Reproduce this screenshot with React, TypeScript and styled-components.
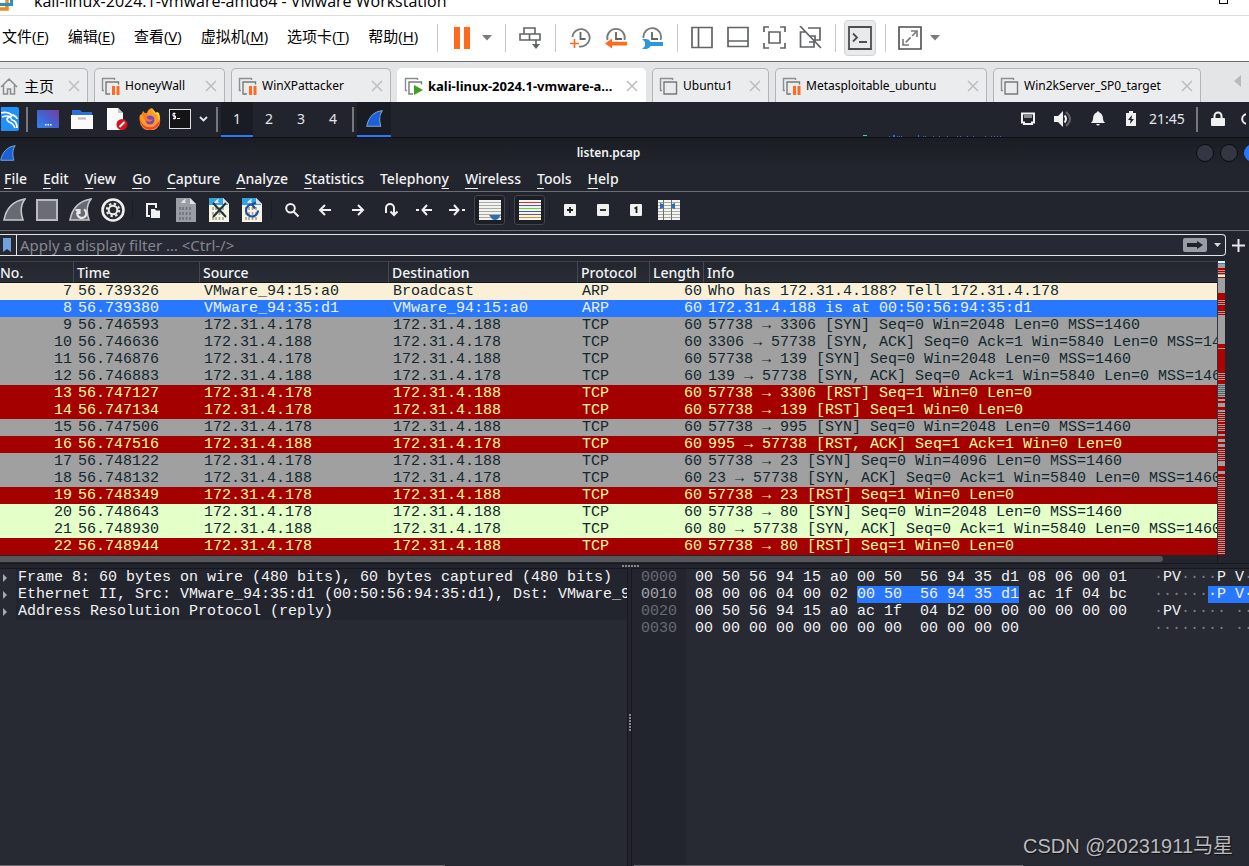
import React from "react";
import styled, { createGlobalStyle, css } from "styled-components";

const Global = createGlobalStyle`
  *, *::before, *::after { box-sizing: border-box; }
  html, body { margin: 0; padding: 0; background: #272933; }
  body { overflow: hidden; }
  button { font: inherit; color: inherit; background: none; border: 0; padding: 0; margin: 0; cursor: default; }
  svg { display: block; flex: none; }
`;

const winFont = `"Open Sans", "Noto Sans CJK SC", sans-serif`;
const kaliFont = `"Noto Sans", "Noto Sans CJK SC", sans-serif`;
const monoFont = `"Liberation Mono", monospace`;

const Page = styled.div`
  display: flex;
  flex-direction: column;
  height: 100vh;
  overflow: hidden;
  font-family: ${winFont};
  color: #000;
`;

/* ---------- host window ---------- */
const TitleBar = styled.header`
  display: flex;
  align-items: flex-end;
  flex: none;
  height: 16px;
  overflow: hidden;
  background: #fff;
  border-bottom: 1px solid #dcdcdc;
`;
const TitleText = styled.h1`
  flex: 1;
  margin: 0 0 4px 20px;
  font-size: 16px;
  line-height: 20px;
  font-weight: 400;
  white-space: nowrap;
`;
const MaxButton = styled.button`
  margin: 0 21px 11px 0;
`;

const MenuBar = styled.div`
  display: flex;
  align-items: center;
  flex: none;
  height: 46px;
  padding-bottom: 2px;
  background: #fff;
  border-bottom: 1px solid #6e6e6e;
`;
const HostMenus = styled.nav`
  display: flex;
  gap: 19px;
  padding-left: 2px;
  width: 430px;
  padding-bottom: 4px;
`;
const HostMenu = styled.button`
  font-size: 15px;
  line-height: 20px;
  white-space: nowrap;
  u { text-underline-offset: 2px; }
`;
const Divider = styled.span`
  flex: none;
  width: 1px;
  height: 28px;
  margin: 0 6px 0 7px;
  background: #c8c8c8;
`;
const HostTool = styled.button<{ $on?: boolean }>`
  display: flex;
  align-items: center;
  justify-content: center;
  width: 36px;
  height: 36px;
  ${(p) =>
    p.$on &&
    css`
      width: 32px;
      margin: 0 2px;
      background: #e9eaec;
      border: 1px solid #d2d3d5;
      border-radius: 4px;
    `}
`;
const HostDrop = styled.button`
  display: flex;
  justify-content: flex-start;
  width: 18px;
  padding-left: 2px;
`;

const TabStrip = styled.div`
  display: flex;
  align-items: flex-end;
  gap: 6px;
  flex: none;
  height: 40px;
  background: #e4e5e7;
`;
const Tab = styled.div<{ $w: number; $active?: boolean }>`
  display: flex;
  align-items: center;
  flex: 0 1 ${(p) => p.$w}px;
  min-width: 0;
  height: 34px;
  padding: 0 7px 0 6px;
  border: 1px solid ${(p) => (p.$active ? "#fff" : "#b4b5b8")};
  border-bottom: 0;
  border-radius: 5px 5px 0 0;
  background: ${(p) => (p.$active ? "#fff" : "#ebecee")};
  font-weight: ${(p) => (p.$active ? 700 : 400)};
`;
const TabLabel = styled.button<{ $cjk?: boolean; $big?: boolean }>`
  flex: 1;
  min-width: 0;
  margin-left: 5px;
  text-align: left;
  font-family: ${(p) => (p.$cjk ? winFont : kaliFont)};
  font-size: ${(p) => (p.$cjk ? 15 : p.$big ? 13 : 12)}px;
  line-height: 20px;
  white-space: nowrap;
  overflow: hidden;
`;
const HomeTab = styled(Tab)`
  padding-left: 0;
  border-left: 0;
  border-top-left-radius: 0;
`;
const TabScroll = styled.button`
  margin: 0 8px 15px auto;
`;

/* ---------- guest panel ---------- */
const Panel = styled.div`
  display: flex;
  align-items: stretch;
  flex: none;
  height: 36px;
  background: #22242d;
  border-bottom: 1px solid #0e0f13;
  color: #e4e6ea;
  font-family: ${kaliFont};
`;
const PanelItem = styled.button<{ $w: number; $active?: boolean }>`
  display: flex;
  align-items: center;
  justify-content: center;
  width: ${(p) => p.$w}px;
  font-size: 14px;
  border-bottom: 2px solid transparent;
  ${(p) =>
    p.$active &&
    css`
      background: #1a1c24;
      border-bottom-color: #2777ff;
    `}
`;
const PanelSep = styled.span<{ $m?: number }>`
  width: 2px;
  margin: 5px ${(p) => p.$m ?? 3}px;
  background: #77787d;
`;
const PanelFill = styled.div`
  flex: 1;
  display: flex;
  align-items: flex-end;
  justify-content: flex-end;
  padding-right: 7px;
`;
const Clock = styled.time`
  align-self: center;
  width: 36px;
  margin: 0 11px 2px 2px;
  font-size: 14px;
  line-height: 20px;
  display: flex;
  justify-content: center;
  white-space: nowrap;
`;

/* ---------- Wireshark ---------- */
const Shark = styled.main`
  display: flex;
  flex-direction: column;
  flex: 1;
  min-height: 0;
  background: #22252d;
  color: #f2f3f5;
  font-family: ${kaliFont};
`;
const SharkTitle = styled.div`
  display: grid;
  grid-template-columns: 1fr auto 1fr;
  align-items: center;
  flex: none;
  height: 30px;
  background: linear-gradient(#1b1d24, #22252d);
`;
const SharkName = styled.h2`
  margin: 0 0 0 -32px;
  font-size: 12px;
  line-height: 16px;
  font-weight: 600;
`;
const WindowButtons = styled.div`
  display: flex;
  gap: 6px;
  justify-content: flex-end;
  margin-right: -13px;
`;
const Dot = styled.button<{ $close?: boolean }>`
  width: 18px;
  height: 18px;
  border-radius: 50%;
  background: ${(p) => (p.$close ? "#2777ff" : "#333743")};
  border: 1px solid ${(p) => (p.$close ? "#2777ff" : "#0b0c10")};
`;
const SharkMenus = styled.nav`
  display: flex;
  gap: 16px;
  flex: none;
  height: 24px;
  padding-left: 4px;
  border-bottom: 1px solid #6c6d73;
`;
const SharkMenu = styled.button`
  font-size: 14px;
  font-weight: 500;
  line-height: 20px;
  height: 22px;
  white-space: nowrap;
  u { text-underline-offset: 4px; }
`;
const ToolBar = styled.div`
  display: flex;
  align-items: center;
  flex: none;
  height: 39px;
  margin-left: -3px;
  padding-bottom: 2px;
  border-bottom: 1px solid #6c6d73;
`;
const Tool = styled.button<{ $on?: boolean }>`
  display: flex;
  align-items: center;
  justify-content: center;
  width: 33px;
  height: 30px;
  ${(p) =>
    p.$on &&
    css`
      width: 31px;
      margin: 0 1px;
      border: 1px solid #41444d;
      border-radius: 3px;
      background: #1b1e25;
    `}
`;
const ToolSep = styled.span`
  width: 1px;
  height: 18px;
  margin: 0 3px;
  background: #1b1d24;
`;
const FilterRow = styled.div`
  display: flex;
  align-items: center;
  flex: none;
  height: 30px;
  padding: 2px 4px 4px 0;
`;
const FilterBox = styled.div`
  display: flex;
  align-items: center;
  flex: 1;
  height: 22px;
  background: #262833;
  border: 1px solid #e3e4e6;
  border-left: 0;
  border-radius: 0 4px 4px 0;
`;
const Bookmark = styled.button`
  display: flex;
  align-items: center;
  height: 20px;
  width: 17px;
  padding-left: 3px;
  border-right: 1px solid #e3e4e6;
`;
const FilterInput = styled.input`
  flex: 1;
  min-width: 0;
  height: 20px;
  padding: 0 3px;
  border: 0;
  outline: 0;
  background: transparent;
  color: #f2f3f5;
  font: 15px/20px ${kaliFont};
  &::placeholder { color: #85878e; opacity: 1; }
`;
const Apply = styled.button`
  display: flex;
  align-items: center;
  justify-content: center;
  width: 24px;
  height: 14px;
  margin-right: 7px;
  border-radius: 2px;
  background: #999ba7;
`;
const FilterDrop = styled.button`
  margin-right: 4px;
`;
const AddFilter = styled.button`
  margin: 0 0 0 6px;
`;

const ListArea = styled.section`
  display: flex;
  flex: none;
  padding-right: 24px;
`;
const ListWrap = styled.div`
  flex: 1;
  min-width: 0;
  overflow: hidden;
  border-right: 1px solid #33363f;
`;
const Table = styled.table`
  width: 100%;
  table-layout: fixed;
  border-collapse: separate;
  border-spacing: 0;
`;
const Th = styled.th<{ $w?: number; $first?: boolean }>`
  width: ${(p) => (p.$w ? p.$w + "px" : "auto")};
  height: 22px;
  padding: 2px 0 0 ${(p) => (p.$first ? 0 : 3)}px;
  text-align: left;
  font-weight: 500;
  font-size: 14px;
  line-height: 18px;
  border-top: 1px solid #3d4048;
  border-bottom: 1px solid #16181e;
  border-right: ${(p) => (p.$w ? "1px solid #454850" : "0")};
  background: linear-gradient(#23262e, #292d35);
`;
type Tone = "arp" | "sel" | "syn" | "rst" | "http";
const tones: Record<Tone, [string, string]> = {
  arp: ["#faf0d7", "#12272e"],
  sel: ["#2777ff", "#eaf2ff"],
  syn: ["#a0a0a0", "#12272e"],
  rst: ["#a40000", "#fffc9c"],
  http: ["#e4ffc7", "#12272e"],
};
const Row = styled.tr<{ $tone: Tone }>`
  background: ${(p) => tones[p.$tone][0]};
  color: ${(p) => tones[p.$tone][1]};
`;
const Td = styled.td<{ $right?: boolean }>`
  height: 17px;
  padding: 0 ${(p) => (p.$right ? 2 : 0)}px 0 ${(p) => (p.$right ? 0 : 4)}px;
  text-align: ${(p) => (p.$right ? "right" : "left")};
  font: 15px/17px ${monoFont};
  white-space: pre;
  overflow: hidden;
`;
const HScroll = styled.div`
  flex: none;
  height: 8px;
  margin-right: 31px;
  padding: 1px 0;
  border-right: 1px solid #16181e;
`;
const HThumb = styled.div`
  width: calc(100% - 54px);
  height: 6px;
  border-radius: 0 3px 3px 0;
  background: #55575b;
`;
const SplitH = styled.div`
  display: flex;
  align-items: center;
  justify-content: center;
  flex: none;
  height: 5px;
  padding-left: 12px;
  border-top: 1px solid #16181e;
`;
const Panes = styled.section`
  display: grid;
  grid-template-columns: minmax(0, 627fr) 5px minmax(0, 617fr);
  flex: 1;
  min-height: 0;
`;
const Pane = styled.div`
  display: flex;
  flex-direction: column;
  min-width: 0;
  overflow: hidden;
  background: #272933;
  border-top: 1px solid #16181e;
  font: 15px/17px ${monoFont};
`;
const SplitV = styled.div`
  display: flex;
  align-items: center;
  justify-content: center;
  padding-top: 10px;
  border-left: 1px solid #16181e;
  border-right: 1px solid #16181e;
`;
const TreeRow = styled.button`
  display: flex;
  align-items: center;
  flex: none;
  height: 17px;
  text-align: left;
  white-space: pre;
  span {
    flex: 1;
    min-width: 0;
    overflow: hidden;
    margin-left: 9px;
    padding-left: 2px;
    background: #23252e;
  }
  svg { margin-left: 3px; }
`;
const PaneFill = styled.div`
  flex: 1;
  display: flex;
`;
const PaneScroll = styled.div<{ $pct: number; $left?: number }>`
  flex: none;
  width: ${(p) => p.$pct}%;
  height: 1px;
  margin-left: ${(p) => p.$left ?? 0}px;
  background: #66686c;
`;
const HexRow = styled.div`
  display: flex;
  flex: none;
  height: 17px;
  white-space: pre;
`;
const Offset = styled.span<{ $hot?: boolean }>`
  flex: none;
  width: 54px;
  padding-left: 9px;
  background: #23252e;
  color: ${(p) => (p.$hot ? "#a3a5aa" : "#696b72")};
`;
const Bytes = styled.span`
  flex: none;
  width: 459px;
  padding-left: 9px;
  mark { color: inherit; background: #2777ff; }
`;
const Ascii = styled.span`
  padding-left: 9px;
  i { font-style: normal; color: #7d7f86; }
  mark { color: inherit; background: #2777ff; }
`;
const Gutter = styled.div`
  width: 54px;
  background: #23252e;
`;
const Watermark = styled.div`
  position: absolute;
  right: 16px;
  bottom: 8px;
  font: 20px/24px "Liberation Sans", "Noto Sans CJK SC", sans-serif;
  color: #b9babd;
  text-shadow: 1px 1px 1px #111;
`;

/* ---------- host icons ---------- */
const grey = "#616365";
const VmStack = ({ state }: { state: "off" | "paused" | "on" }) => (
  <svg width="19" height="18" viewBox="0 0 19 18" fill="none">
    <path d="M3 13.5H1.5V1.5H13.5V3" stroke="#8c8e90" strokeWidth="1.4" />
    <path
      d={state === "off" ? "M5 5H17.5V17H5Z" : "M9 17H5V5H17.5V7.5"}
      stroke="#77797b"
      strokeWidth="1.4"
    />
    {state === "paused" && <path d="M11 9h3v9h-3zM15.500 9h3v9h-3z" fill="#ff6a1f" />}
    {state === "on" && <path d="M10 8l9 5-9 5z" fill="#3fa01e" />}
  </svg>
);
const CloseX = ({ label }: { label: string }) => (
  <button aria-label={`Close ${label}`}>
    <svg width="12" height="12" viewBox="0 0 12 12">
      <path d="M1 1l10 10M11 1L1 11" stroke="#bdbec0" strokeWidth="1.5" />
    </svg>
  </button>
);
const Caret = () => (
  <svg width="10" height="6" viewBox="0 0 10 6">
    <path d="M0 0h10L5 5.500z" fill="#77797b" />
  </svg>
);
const ClockFace = ({ children }: { children: React.ReactNode }) => (
  <svg width="22" height="22" viewBox="0 0 22 22" fill="none">
    {children}
  </svg>
);

const hostTools = {
  pause: (
    <svg width="18" height="22" viewBox="0 0 18 22">
      <path d="M1 0h6v22H1zM11 0h6v22h-6z" fill="#ff6a1f" />
    </svg>
  ),
  cad: (
    <svg width="22" height="22" viewBox="0 0 22 22" fill="none" stroke={grey} strokeWidth="1.6">
      <path d="M5 1h11v6H5zM1 7h9.500v6H1zM10.500 7H21v6H10.500zM17 13v5" />
      <path d="M13 17h8l-4 5z" fill={grey} stroke="none" />
    </svg>
  ),
  snap: (
    <ClockFace>
      <path d="M3.300 10A8.700 8.700 0 1 1 10 19.300" stroke="#77797b" strokeWidth="1.8" />
      <path d="M11.500 5v7h5" stroke={grey} strokeWidth="1.800" />
      <path d="M5.500 12v9M1 16.500h9" stroke="#ff6a1f" strokeWidth="1.600" />
    </ClockFace>
  ),
  revert: (
    <ClockFace>
      <path d="M2.500 13A8.800 8.800 0 1 1 19.500 13" stroke="#77797b" strokeWidth="1.8" />
      <path d="M11 5v7h6" stroke={grey} strokeWidth="1.8" />
      <path d="M0 16.500l7-5v3.300h15v3.800H7v3z" fill="#ff6a1f" />
    </ClockFace>
  ),
  manage: (
    <ClockFace>
      <path d="M2.500 11A8.800 8.800 0 1 1 19.500 13" stroke="#77797b" strokeWidth="1.800" />
      <path d="M11 5v7h6" stroke={grey} strokeWidth="1.800" />
      <path d="M1 12h4.500a4.500 4.500 0 0 1 4 3H22v4H9.500a4.500 4.500 0 0 1-4 3H1l3-3v-4z" fill="#2b98dd" />
    </ClockFace>
  ),
};
const viewTools: [string, React.ReactNode][] = [
  ["Library", <path key="a" d="M1 1.500h20v20H1zM7.500 1.500v20" />],
  ["Thumbnails", <path key="b" d="M1 1.500h20v19H1zM1 15h20" />],
  ["Full screen", <path key="c" d="M1 6V1h5M17 1h5v5M22 17v5h-5M6 22H1v-5M6 6h11v11H6z" />],
  ["Unity", <path key="d" d="M9 2h12v12h-5M6 6h-4.500v15H15v-5M10 10h6v6h-6M1 0l21 22" />],
];

/* ---------- guest icons ---------- */
const FinShape = ({ size, fill = "#1762d8" }: { size: number; fill?: string }) => (
  <svg width={size} height={size} viewBox="0 0 22 22">
    <path d="M1 21C3 10 10 2 21 1c-4 5-4 12-2 20z" fill={fill} stroke="#8aa4cc" strokeWidth="1.300" />
  </svg>
);
const GreyFin = ({ restart }: { restart?: boolean }) => (
  <svg width="24" height="24" viewBox="0 0 24 24" fill="none">
    <path d="M2 22C4 11 11 3 23 1c-4.500 6-4.500 14-2 21z" fill="#686a71" stroke="#c5c7cb" strokeWidth="1.600" />
    {restart && <path d="M16 11.500a4.500 4.500 0 1 1-6 1.500M7.500 12h4v4" stroke="#e6e7ea" strokeWidth="2.200" />}
  </svg>
);
const DocIcon = ({ mode }: { mode: "save" | "close" | "reload" }) => (
  <svg width="20" height="24" viewBox="0 0 20 24" fill="none">
    <path d="M0 0h14l6 6v18H0z" fill={mode === "save" ? "#9b9da5" : "#f6f4e4"} />
    {mode !== "save" && <path d="M0 0h14l5 5v2H0z" fill="#34a5dc" />}
    <path d="M5 5c1-2 3-4 5-4-1 2-1 3 0 4zM14 0v6h6" fill="#dfe3e6" />
    <path
      d="M4 9v3M7 9v3M10.500 9v3M14 9v3M4 14v3M7 14v3M10.500 14v3M14 14v3M4 19v3M7 19v3M10.500 19v3M14 19v3"
      stroke={mode === "save" ? "#6f7179" : "#a3a392"}
      strokeWidth="1.600"
    />
    {mode === "close" && <path d="M4 5l13 14M17 5L4 19" stroke="#25303a" strokeWidth="2" />}
    {mode === "reload" && (
      <path d="M10 6.500A6 6 0 1 0 16 12.500M14 4.500l-4 2 3 4" stroke="#234f9c" strokeWidth="2.200" />
    )}
  </svg>
);
const Glyph = ({ d, w = 16 }: { d: string; w?: number }) => (
  <svg width={w} height="16" viewBox={`0 0 ${w} 16`} fill="none" stroke="#f0f0f0" strokeWidth="2">
    <path d={d} />
  </svg>
);
const Zoomer = ({ d }: { d: string }) => (
  <svg width="12" height="12" viewBox="0 0 12 12" fill="none">
    <rect width="12" height="12" rx="1" fill="#f0f0f0" />
    <path d={d} stroke="#1c1e25" strokeWidth="1.800" />
  </svg>
);
const Lines = ({ colors, children }: { colors: string[]; children?: React.ReactNode }) => (
  <svg width="22" height="20" viewBox="0 0 22 20">
    <rect width="22" height="20" fill="#f3f3ef" />
    {colors.map((c, i) => (
      <rect key={i} y={2 + i * 3} width="22" height="1" fill={c} shapeRendering="crispEdges" />
    ))}
    {children}
  </svg>
);
const greys = Array(6).fill("#a9aaa6");

const toolGroups: { label: string; on?: boolean; icon: React.ReactNode }[][] = [
  [
    { label: "Start capture", icon: <GreyFin /> },
    {
      label: "Stop capture",
      icon: (
        <svg width="22" height="22" viewBox="0 0 22 22">
          <rect x="1" y="1" width="20" height="20" fill="#6b6d74" stroke="#b9bbc1" strokeWidth="2" />
        </svg>
      ),
    },
    { label: "Restart capture", icon: <GreyFin restart /> },
    {
      label: "Capture options",
      icon: (
        <svg width="24" height="24" viewBox="0 0 24 24" fill="none">
          <circle cx="12" cy="12" r="10.500" fill="#2a2c33" stroke="#f0f0f0" strokeWidth="2.600" />
          <circle cx="12" cy="12" r="4.300" stroke="#f0f0f0" strokeWidth="2" />
          <circle cx="12" cy="12" r="6.200" stroke="#f0f0f0" strokeWidth="2" strokeDasharray="2.400 2.470" />
        </svg>
      ),
    },
  ],
  [
    {
      label: "Open",
      icon: (
        <svg width="16" height="16" viewBox="0 0 16 16">
          <path d="M5 14H2V2h9v4" fill="none" stroke="#f0f0f0" strokeWidth="2" />
          <path d="M6 7h4l1 1.500h4V16H6z" fill="#f0f0f0" />
        </svg>
      ),
    },
    { label: "Save", icon: <DocIcon mode="save" /> },
    { label: "Close", icon: <DocIcon mode="close" /> },
    { label: "Reload", icon: <DocIcon mode="reload" /> },
  ],
  [
    { label: "Find", icon: <Glyph d="M6.500 2a4.300 4.300 0 1 1 0 8.600a4.300 4.300 0 1 1 0-8.600M9.800 9.800l4.700 4.700" /> },
    { label: "Back", icon: <Glyph d="M14 8H3.500M8 3L3 8l5 5" /> },
    { label: "Forward", icon: <Glyph d="M2 8h10.500M8 3l5 5-5 5" /> },
    { label: "Go to packet", icon: <Glyph d="M3 11V6a4 4 0 0 1 8 0v6M7.500 9.500L11 13l3.500-3.500" /> },
    { label: "First packet", icon: <Glyph d="M16 8H7M11 3L6.500 8l4.500 5M0 8h3" /> },
    { label: "Last packet", icon: <Glyph d="M0 8h9M5 3l4.500 5L5 13M13 8h3" /> },
    { label: "Auto scroll", on: true, icon: <Lines colors={greys}><path d="M10 15h12l-3 4q-3 2-6 0z" fill="#2f6db3" /></Lines> },
  ],
  [
    {
      label: "Colorize",
      on: true,
      icon: <Lines colors={["#ef2929", "#3465a4", "#73d216", "#3465a4", "#75507b", "#c4a000"]} />,
    },
  ],
  [
    { label: "Zoom in", icon: <Zoomer d="M3 6h6M6 3v6" /> },
    { label: "Zoom out", icon: <Zoomer d="M3 6h6" /> },
    { label: "Normal size", icon: <Zoomer d="M4.500 4.500L6.500 3.500V9" /> },
    {
      label: "Resize columns",
      icon: (
        <Lines colors={greys}>
          <path d="M5 0h1v20H5zM13 0h1v20h-1z" fill="#6b6d6b" />
          <path d="M2 3q4 1 4 3t-4 3zM17 3q-4 1-4 3t4 3z" fill="#2f6db3" />
        </Lines>
      ),
    },
  ],
];

/* ---------- data ---------- */
const hostMenus: [string, string][] = [
  ["文件", "F"],
  ["编辑", "E"],
  ["查看", "V"],
  ["虚拟机", "M"],
  ["选项卡", "T"],
  ["帮助", "H"],
];
const tabs: { name: string; w: number; state: "off" | "paused" | "on" }[] = [
  { name: "HoneyWall", w: 131, state: "paused" },
  { name: "WinXPattacker", w: 160, state: "paused" },
  { name: "kali-linux-2024.1-vmware-a...", w: 249, state: "on" },
  { name: "Ubuntu1", w: 117, state: "off" },
  { name: "Metasploitable_ubuntu", w: 212, state: "paused" },
  { name: "Win2kServer_SP0_target", w: 208, state: "off" },
];
/* label, index of the underlined letter */
const sharkMenus: [string, number][] = [
  ["File", 0],
  ["Edit", 0],
  ["View", 0],
  ["Go", 0],
  ["Capture", 0],
  ["Analyze", 0],
  ["Statistics", 0],
  ["Telephony", 8],
  ["Wireless", 0],
  ["Tools", 0],
  ["Help", 0],
];
const A = "172.31.4.178";
const B = "172.31.4.188";
const packets: [number, string, string, string, string, string, Tone][] = [
  [7, "56.739326", "VMware_94:15:a0", "Broadcast", "ARP", "Who has 172.31.4.188? Tell 172.31.4.178", "arp"],
  [8, "56.739380", "VMware_94:35:d1", "VMware_94:15:a0", "ARP", "172.31.4.188 is at 00:50:56:94:35:d1", "sel"],
  [9, "56.746593", A, B, "TCP", "57738 → 3306 [SYN] Seq=0 Win=2048 Len=0 MSS=1460", "syn"],
  [10, "56.746636", B, A, "TCP", "3306 → 57738 [SYN, ACK] Seq=0 Ack=1 Win=5840 Len=0 MSS=1460", "syn"],
  [11, "56.746876", A, B, "TCP", "57738 → 139 [SYN] Seq=0 Win=2048 Len=0 MSS=1460", "syn"],
  [12, "56.746883", B, A, "TCP", "139 → 57738 [SYN, ACK] Seq=0 Ack=1 Win=5840 Len=0 MSS=1460", "syn"],
  [13, "56.747127", A, B, "TCP", "57738 → 3306 [RST] Seq=1 Win=0 Len=0", "rst"],
  [14, "56.747134", A, B, "TCP", "57738 → 139 [RST] Seq=1 Win=0 Len=0", "rst"],
  [15, "56.747506", A, B, "TCP", "57738 → 995 [SYN] Seq=0 Win=2048 Len=0 MSS=1460", "syn"],
  [16, "56.747516", B, A, "TCP", "995 → 57738 [RST, ACK] Seq=1 Ack=1 Win=0 Len=0", "rst"],
  [17, "56.748122", A, B, "TCP", "57738 → 23 [SYN] Seq=0 Win=4096 Len=0 MSS=1460", "syn"],
  [18, "56.748132", B, A, "TCP", "23 → 57738 [SYN, ACK] Seq=0 Ack=1 Win=5840 Len=0 MSS=1460", "syn"],
  [19, "56.748349", A, B, "TCP", "57738 → 23 [RST] Seq=1 Win=0 Len=0", "rst"],
  [20, "56.748643", A, B, "TCP", "57738 → 80 [SYN] Seq=0 Win=2048 Len=0 MSS=1460", "http"],
  [21, "56.748930", B, A, "TCP", "80 → 57738 [SYN, ACK] Seq=0 Ack=1 Win=5840 Len=0 MSS=1460", "http"],
  [22, "56.748944", A, B, "TCP", "57738 → 80 [RST] Seq=1 Win=0 Len=0", "rst"],
];
const columns: [string, number?][] = [
  ["No.", 74],
  ["Time", 126],
  ["Source", 189],
  ["Destination", 189],
  ["Protocol", 72],
  ["Length", 54],
  ["Info"],
];
const tree = [
  "Frame 8: 60 bytes on wire (480 bits), 60 bytes captured (480 bits)",
  "Ethernet II, Src: VMware_94:35:d1 (00:50:56:94:35:d1), Dst: VMware_9",
  "Address Resolution Protocol (reply)",
];

/* solid runs of the overview strip: y, height, colour */
const red = "#b00000";
const runs: [number, number, string][] = [
  [0, 2, "#faf0d7"], [2, 1, "#2777ff"], [7, 2, red], [10, 1, red], [12, 1, red],
  [14, 2, "#f3f6c8"], [16, 1, red], [32, 7, red], [40, 1, red], [42, 1, red], [44, 1, red],
  [45, 5, red], [51, 1, red], [53, 1, red], [83, 4, red], [88, 24, red], [120, 3, red],
  [136, 2, red], [140, 2, red], [146, 3, red], [161, 2, red], [170, 3, red], [175, 3, red],
  [181, 2, red], [186, 2, red], [205, 5, red], [213, 3, red],
];
/* striped stretches: first y, last y */
const stripes: [number, number, string][] = [
  [113, 119, red],
  [124, 134, "#506a6a"],
  [151, 160, red],
  [164, 169, red],
  [189, 200, red],
  [217, 293, red],
];
const Overview = () => (
  <svg width="7" height="294" viewBox="0 0 7 294" shapeRendering="crispEdges">
    <rect width="7" height="294" fill="#a0a0a0" />
    {runs.map(([y, h, c]) => (
      <rect key={y} y={y} width="7" height={h} fill={c} />
    ))}
    {stripes.flatMap(([a, b, c]) =>
      Array.from({ length: Math.floor((b - a) / 2) + 1 }, (_, i) => (
        <rect key={`${a}-${i}`} y={a + i * 2} width="7" height="1" fill={c} />
      ))
    )}
  </svg>
);
const dimDots = (text: string) =>
  text.split(/(·+)/).map((part, i) => (part.startsWith("·") ? <i key={i}>{part}</i> : part));

export default function App() {
  return (
    <Page>
      <Global />
      <TitleBar>
        <svg width="14" height="15" viewBox="0 0 14 15" fill="none">
          <path d="M0 9h7V0" stroke="#f08a1c" strokeWidth="3.500" />
          <path d="M0 4.500h11.500V0" stroke="#2a8fc4" strokeWidth="3" />
        </svg>
        <TitleText>kali-linux-2024.1-vmware-amd64 - VMware Workstation</TitleText>
        <MaxButton aria-label="Maximize">
          <svg width="9" height="9" viewBox="0 0 9 9" fill="none">
            <rect x=".5" y=".5" width="8" height="8" stroke="#000" />
          </svg>
        </MaxButton>
      </TitleBar>

      <MenuBar>
        <HostMenus>
          {hostMenus.map(([label, key]) => (
            <HostMenu key={key}>
              {label}(<u>{key}</u>)
            </HostMenu>
          ))}
        </HostMenus>
        <Divider />
        <HostTool aria-label="Suspend">{hostTools.pause}</HostTool>
        <HostDrop aria-label="Power options"><Caret /></HostDrop>
        <Divider />
        <HostTool aria-label="Send Ctrl+Alt+Del">{hostTools.cad}</HostTool>
        <Divider />
        <HostTool aria-label="Take snapshot">{hostTools.snap}</HostTool>
        <HostTool aria-label="Revert snapshot">{hostTools.revert}</HostTool>
        <HostTool aria-label="Manage snapshots">{hostTools.manage}</HostTool>
        <Divider />
        {viewTools.map(([label, art]) => (
          <HostTool key={label} aria-label={label}>
            <svg width="23" height="23" viewBox="0 0 23 23" fill="none" stroke={grey} strokeWidth="1.700">
              {art}
            </svg>
          </HostTool>
        ))}
        <Divider />
        <HostTool $on aria-label="Console view">
          <svg width="24" height="24" viewBox="0 0 24 24" fill="none" stroke="#4c4e50" strokeWidth="1.800">
            <path d="M1 1h22v22H1z" />
            <path d="M5 7.500l4 4-4 4M11 16h8" />
          </svg>
        </HostTool>
        <Divider />
        <HostTool aria-label="Stretch guest">
          <svg width="24" height="24" viewBox="0 0 24 24" fill="none" stroke="#4c4e50" strokeWidth="1.600">
            <path d="M1 1h22v22H1z" />
            <path d="M13 5h6v6M11 19H5v-6" stroke="#77797b" />
            <path d="M19 5L5 19" stroke="#77797b" strokeDasharray="7 2" />
          </svg>
        </HostTool>
        <HostDrop aria-label="Stretch options"><Caret /></HostDrop>
      </MenuBar>

      <TabStrip>
        <HomeTab $w={88}>
          <svg width="19" height="18" viewBox="0 0 19 18" fill="none" stroke="#8a8c8e" strokeWidth="1.500">
            <path d="M1 10l8-8 8 8M3.500 8v9h4v-5h3v5h4V8" />
          </svg>
          <TabLabel $cjk>主页</TabLabel>
          <CloseX label="主页" />
        </HomeTab>
        {tabs.map((t) => (
          <Tab key={t.name} $w={t.w} $active={t.state === "on"}>
            <VmStack state={t.state} />
            <TabLabel $big={t.state === "on"}>{t.name}</TabLabel>
            <CloseX label={t.name} />
          </Tab>
        ))}
        <TabScroll aria-label="Scroll tabs">
          <svg width="7" height="12" viewBox="0 0 7 12"><path d="M7 0v12L0 6z" fill="#b9babd" /></svg>
        </TabScroll>
      </TabStrip>

      <Panel>
        <PanelItem $w={23} aria-label="Applications">
          <svg width="22" height="30" viewBox="0 0 22 30" fill="none">
            <rect x="-4" y="3" width="22" height="24" rx="2" fill="#2191f5" />
            <path d="M0 9q6-2 11 2 5 1 5 4M1 13q8-3 10 3 5 1 5 8M11 12q-8 2-3 6 4 1 6 6M12 11l3 2" stroke="#fff" strokeWidth="1.700" />
          </svg>
        </PanelItem>
        <PanelSep />
        <PanelItem $w={34} aria-label="Show desktop">
          <svg width="22" height="18" viewBox="0 0 22 18">
            <defs>
              <linearGradient id="desk" x1="0" y1="1" x2="1" y2="0">
                <stop offset="0" stopColor="#2f86f0" />
                <stop offset=".5" stopColor="#4461cf" />
                <stop offset="1" stopColor="#7a3d9c" />
              </linearGradient>
            </defs>
            <rect width="22" height="18" rx="1" fill="url(#desk)" />
            <path d="M8 14h1.500v1.500H8zM10.500 14H12v1.500h-1.500zM13 14h1.500v1.500H13z" fill="#fff" />
          </svg>
        </PanelItem>
        <PanelItem $w={34} aria-label="Files">
          <svg width="22" height="20" viewBox="0 0 22 20">
            <path d="M1 1h8l2 2h10v6H1z" fill="#2e6fe0" />
            <path d="M0 6h22v14H0z" fill="#fafafa" />
            <path d="M7 9.500h8" stroke="#b9b9b9" strokeWidth="2" />
          </svg>
        </PanelItem>
        <PanelItem $w={36} aria-label="Text editor">
          <svg width="22" height="22" viewBox="0 0 22 22">
            <path d="M1 0h11l5 5v17H1z" fill="#fafafa" />
            <path d="M12 0v5h5z" fill="#c4c4c4" />
            <circle cx="16" cy="16.500" r="5.500" fill="#d4161c" />
            <path d="M13.500 19l5-5" stroke="#fff" strokeWidth="1.800" />
          </svg>
        </PanelItem>
        <PanelItem $w={30} aria-label="Firefox">
          <svg width="22" height="22" viewBox="0 0 22 22">
            <path d="M1 7q2 0 3-4 2 3 4 2 1-4 5-5 0 3 4 5l1-1q4 5 3 10a10 8.500 0 0 1-20 0Q0 10 1 7z" fill="#ff9d1f" />
            <path d="M1 11q3 10 13 8 6-3 6-9 2 5-2 9-5 4-11 2-6-3-6-10z" fill="#f0403c" />
            <path d="M13 0q0 4 4 6 4 4 2 9 3-4 1-10l-2-1-1 1z" fill="#ffd43a" />
            <circle cx="11" cy="12" r="4.500" fill="#7b45c9" />
            <path d="M4 5q4 0 6 2-3 0-2 3 2 3 6 1-3 5-8 1-3-3-2-7z" fill="#ff7a1a" />
          </svg>
        </PanelItem>
        <PanelItem $w={29} aria-label="Terminal">
          <svg width="22" height="20" viewBox="0 0 22 20" fill="none">
            <rect x=".5" y=".5" width="21" height="19" fill="#141414" stroke="#dedede" />
            <path d="M6.500 4.500H4V7h2.500v2.500H4M5.200 3.500v7M8 9.500h3" stroke="#fff" strokeWidth="1" />
          </svg>
        </PanelItem>
        <PanelItem $w={19} aria-label="More terminals">
          <svg width="9" height="6" viewBox="0 0 9 6" fill="none"><path d="M1 1l3.500 3.500L8 1" stroke="#e8e8e8" strokeWidth="1.800" /></svg>
        </PanelItem>
        <PanelSep />
        {["1", "2", "3", "4"].map((n) => (
          <PanelItem key={n} $w={32} $active={n === "1"}>{n}</PanelItem>
        ))}
        <PanelSep />
        <PanelItem $w={34} $active aria-label="Wireshark"><FinShape size={17} /></PanelItem>
        <PanelFill>
          <svg width="140" height="2" viewBox="0 0 140 2" shapeRendering="crispEdges">
            <path d="M0 0h4v1H0z" fill="#2ad8c0" />
            <path d="M26 1h1v1h-1zM30 0h2v2h-2zM34 1h1v1h-1zM36 1h1v1h-1zM38 1h1v1h-1zM55 0h1v2h-1zM60 1h1v1h-1zM62 1h1v1h-1zM70 1h1v1h-1zM76 1h1v1h-1zM84 1h1v1h-1zM94 1h1v1h-1zM97 1h1v1h-1zM104 1h1v1h-1zM110 1h1v1h-1zM122 1h1v1h-1zM128 1h1v1h-1zM131 1h1v1h-1zM134 1h1v1h-1zM137 1h1v1h-1z" fill="#2d6fe0" />
          </svg>
        </PanelFill>
        <PanelItem $w={35} aria-label="Network">
          <svg width="16" height="14" viewBox="0 0 16 14" fill="none">
            <path d="M2 1.500h12v9h-2v1.500H4v-1.500H2z" stroke="#f0f0f0" strokeWidth="2" />
            <path d="M5 3v3M7 3v3M9 3v3M11 3v3" stroke="#f0f0f0" />
          </svg>
        </PanelItem>
        <PanelItem $w={35} aria-label="Volume">
          <svg width="18" height="16" viewBox="0 0 18 16" fill="none">
            <path d="M0 5h4l5-5v16l-5-5H0z" fill="#f0f0f0" />
            <path d="M10.500 4.500q3 3.500 0 7" stroke="#f0f0f0" strokeWidth="2" />
            <path d="M12 1q8 7 0 14" stroke="#63656c" strokeWidth="2" />
          </svg>
        </PanelItem>
        <PanelItem $w={35} aria-label="Notifications">
          <svg width="14" height="15" viewBox="0 0 14 15">
            <path d="M7 0l1.500 1.500Q12 3 12 8q0 2 2 4H0q2-2 2-4 0-5 3.500-6.500zM5 13h4q-2 3-4 0z" fill="#f0f0f0" />
          </svg>
        </PanelItem>
        <PanelItem $w={32} aria-label="Battery">
          <svg width="10" height="15" viewBox="0 0 10 15">
            <path d="M0 2h3V0h4v2h3v13H0z" fill="#f0f0f0" />
            <path d="M6 4L2 9h2.500L4 13l4-5H5.500z" fill="#22242d" />
          </svg>
        </PanelItem>
        <Clock>21:45</Clock>
        <PanelSep $m={0} />
        <PanelItem $w={39} aria-label="Lock">
          <svg width="14" height="15" viewBox="0 0 14 15" fill="none">
            <path d="M3.500 8V5a3.500 3.500 0 0 1 7 0v3" stroke="#f0f0f0" strokeWidth="2" />
            <rect y="7" width="14" height="8" rx="1" fill="#f0f0f0" />
          </svg>
        </PanelItem>
        <PanelItem $w={12} aria-label="Log out">
          <svg width="5" height="12" viewBox="0 0 5 12" fill="none"><circle cx="6" cy="6" r="4.800" stroke="#f0f0f0" strokeWidth="2" /></svg>
        </PanelItem>
      </Panel>

      <Shark>
        <SharkTitle>
          <FinShape size={16} />
          <SharkName>listen.pcap</SharkName>
          <WindowButtons>
            <Dot aria-label="Minimize" />
            <Dot aria-label="Maximize window" />
            <Dot $close aria-label="Close window" />
          </WindowButtons>
        </SharkTitle>
        <SharkMenus>
          {sharkMenus.map(([label, at]) => (
            <SharkMenu key={label}>
              {label.slice(0, at)}
              <u>{label[at]}</u>
              {label.slice(at + 1)}
            </SharkMenu>
          ))}
        </SharkMenus>
        <ToolBar>
          {toolGroups.map((group, g) => (
            <React.Fragment key={g}>
              {g > 0 && <ToolSep />}
              {group.map((t) => (
                <Tool key={t.label} $on={t.on} aria-label={t.label}>{t.icon}</Tool>
              ))}
            </React.Fragment>
          ))}
        </ToolBar>
        <FilterRow>
          <FilterBox>
            <Bookmark aria-label="Saved filters">
              <svg width="8" height="14" viewBox="0 0 8 14"><path d="M0 0h8v14L4 11l-4 3z" fill="#6ea3dc" /></svg>
            </Bookmark>
            <FilterInput aria-label="Display filter" placeholder="Apply a display filter … <Ctrl-/>" />
            <Apply aria-label="Apply filter">
              <svg width="16" height="8" viewBox="0 0 16 8"><path d="M0 2h10V0l6 4-6 4V6H0z" fill="#20222b" /></svg>
            </Apply>
            <FilterDrop aria-label="Filter history">
              <svg width="7" height="4" viewBox="0 0 7 4"><path d="M0 0h7L3.500 4z" fill="#d5d6d8" /></svg>
            </FilterDrop>
          </FilterBox>
          <AddFilter aria-label="Add filter button">
            <svg width="13" height="13" viewBox="0 0 13 13"><path d="M6.500 0v13M0 6.500h13" stroke="#e8e8ea" strokeWidth="2" /></svg>
          </AddFilter>
        </FilterRow>

        <ListArea>
          <ListWrap>
            <Table>
              <thead>
                <tr>
                  {columns.map(([name, w], i) => (
                    <Th key={name} $w={w} $first={i === 0}>{name}</Th>
                  ))}
                </tr>
              </thead>
              <tbody>
                {packets.map(([no, time, src, dst, proto, info, tone]) => (
                  <Row key={no} $tone={tone}>
                    <Td $right>{no}</Td>
                    <Td>{time}</Td>
                    <Td>{src}</Td>
                    <Td>{dst}</Td>
                    <Td>{proto}</Td>
                    <Td $right>60</Td>
                    <Td>{info}</Td>
                  </Row>
                ))}
              </tbody>
            </Table>
          </ListWrap>
          <Overview />
        </ListArea>
        <HScroll><HThumb /></HScroll>
        <SplitH>
          <svg width="17" height="2" viewBox="0 0 17 2"><path d="M0 1h17" stroke="#85878c" strokeWidth="2" strokeDasharray="2 1" /></svg>
        </SplitH>
        <Panes>
          <Pane>
            {tree.map((line) => (
              <TreeRow key={line}>
                <svg width="4" height="8" viewBox="0 0 4 8"><path d="M0 0l4 4-4 4z" fill="#a8aaae" /></svg>
                <span>{line}</span>
              </TreeRow>
            ))}
            <PaneFill />
            <PaneScroll $pct={71} />
          </Pane>
          <SplitV>
            <svg width="2" height="17" viewBox="0 0 2 17"><path d="M1 0v17" stroke="#85878c" strokeWidth="2" strokeDasharray="2 1" /></svg>
          </SplitV>
          <Pane>
            <HexRow>
              <Offset>0000</Offset>
              <Bytes>00 50 56 94 15 a0 00 50  56 94 35 d1 08 06 00 01</Bytes>
              <Ascii>{dimDots("·PV····P V·5·····")}</Ascii>
            </HexRow>
            <HexRow>
              <Offset $hot>0010</Offset>
              <Bytes>08 00 06 04 00 02 <mark>00 50  56 94 35 d1</mark> ac 1f 04 bc</Bytes>
              <Ascii>{dimDots("······")}<mark>·P V·5·</mark></Ascii>
            </HexRow>
            <HexRow>
              <Offset>0020</Offset>
              <Bytes>00 50 56 94 15 a0 ac 1f  04 b2 00 00 00 00 00 00</Bytes>
              <Ascii>{dimDots("·PV····· ········")}</Ascii>
            </HexRow>
            <HexRow>
              <Offset>0030</Offset>
              <Bytes>00 00 00 00 00 00 00 00  00 00 00 00</Bytes>
              <Ascii>{dimDots("········ ····")}</Ascii>
            </HexRow>
            <PaneFill><Gutter /></PaneFill>
            <PaneScroll $pct={63} $left={2} />
          </Pane>
        </Panes>
      </Shark>
      <Watermark>CSDN @20231911马星</Watermark>
    </Page>
  );
}
